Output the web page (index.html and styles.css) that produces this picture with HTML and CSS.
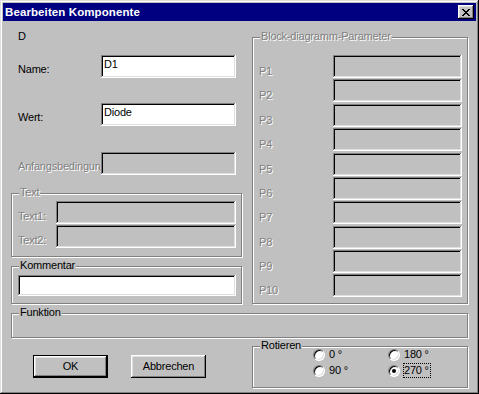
FILE: index.html
```html
<!DOCTYPE html>
<html lang="de">
<head>
<meta charset="utf-8">
<title>Bearbeiten Komponente</title>
<link rel="stylesheet" href="styles.css">
</head>
<body>
<div class="window">
  <div class="titlebar">
    <span class="title">Bearbeiten Komponente</span>
    <button class="close" aria-label="Schließen">
      <svg width="8" height="7" viewBox="0 0 8 7" shape-rendering="crispEdges"><path fill="#000" d="M0 0h2v1H0zM6 0h2v1H6zM1 1h2v1H1zM5 1h2v1H5zM2 2h4v1H2zM3 3h2v1H3zM2 4h4v1H2zM1 5h2v1H1zM5 5h2v1H5zM0 6h2v1H0zM6 6h2v1H6z"/></svg>
    </button>
  </div>
  <div class="body">
    <div class="main">
      <div class="left">
        <div class="static">D</div>
        <div class="row r-name"><span class="lbl">Name:</span><div class="edit">D1</div></div>
        <div class="row r-wert"><span class="lbl">Wert:</span><div class="edit">Diode</div></div>
        <div class="row r-anf"><span class="lbl dis-text">Anfangsbedingung:</span><div class="edit dis"></div></div>
        <div class="group g-text">
          <div class="legend dis-text">Text</div>
          <div class="trow t1"><span class="lbl dis-text">Text1:</span><div class="edit dis"></div></div>
          <div class="trow t2"><span class="lbl dis-text">Text2:</span><div class="edit dis"></div></div>
        </div>
        <div class="group g-komm">
          <div class="legend">Kommentar</div>
          <div class="edit komm"></div>
        </div>
      </div>
      <div class="group g-block">
        <div class="legend dis-text">Block-diagramm-Parameter</div>
        <div class="plist">
          <div class="prow"><span class="lbl dis-text">P1</span><div class="edit dis"></div></div>
          <div class="prow"><span class="lbl dis-text">P2</span><div class="edit dis"></div></div>
          <div class="prow"><span class="lbl dis-text">P3</span><div class="edit dis"></div></div>
          <div class="prow"><span class="lbl dis-text">P4</span><div class="edit dis"></div></div>
          <div class="prow"><span class="lbl dis-text">P5</span><div class="edit dis"></div></div>
          <div class="prow"><span class="lbl dis-text">P6</span><div class="edit dis"></div></div>
          <div class="prow"><span class="lbl dis-text">P7</span><div class="edit dis"></div></div>
          <div class="prow"><span class="lbl dis-text">P8</span><div class="edit dis"></div></div>
          <div class="prow"><span class="lbl dis-text">P9</span><div class="edit dis"></div></div>
          <div class="prow"><span class="lbl dis-text">P10</span><div class="edit dis"></div></div>
        </div>
      </div>
    </div>
    <div class="group g-funk">
      <div class="legend">Funktion</div>
    </div>
    <div class="bottom">
      <div class="buttons">
        <button class="btn default">OK</button>
        <button class="btn">Abbrechen</button>
      </div>
      <div class="group g-rot">
        <div class="legend">Rotieren</div>
        <div class="opt"><span class="radio"></span><span class="otext">0 °</span></div>
        <div class="opt"><span class="radio"></span><span class="otext">180 °</span></div>
        <div class="opt c2"><span class="radio"></span><span class="otext">90 °</span></div>
        <div class="opt"><span class="radio on"></span><span class="otext focus">270 °</span></div>
      </div>
    </div>
  </div>
</div>
</body>
</html>
```

FILE: styles.css
```css
* { box-sizing: border-box; }
html, body { margin: 0; padding: 0; background: #c0c0c0; }
body {
  font-family: "Liberation Sans", Arial, sans-serif;
  font-size: 11px;
  line-height: 13px;
  letter-spacing: -0.2px;
  color: #000;
}
.window {
  width: 479px;
  height: 394px;
  padding: 3px;
  background: #c0c0c0;
  box-shadow: inset -1px -1px #000, inset 1px 1px #dfdfdf, inset -2px -2px #808080, inset 2px 2px #fff;
  display: flex;
  flex-direction: column;
}
.titlebar {
  height: 18px;
  flex: none;
  background: #000080;
  color: #fff;
  display: flex;
  align-items: center;
  padding: 0 2px;
}
.title { flex: 1; font-weight: bold; font-size: 11.5px; letter-spacing: 0.1px; }
.close {
  width: 16px;
  height: 14px;
  padding: 0;
  border: 0;
  background: #c0c0c0;
  box-shadow: inset -1px -1px #000, inset 1px 1px #fff, inset -2px -2px #808080, inset 2px 2px #dfdfdf;
  display: flex;
  align-items: center;
  justify-content: center;
}
.close svg { display: block; }

.body { padding: 0 8px; }
.main { display: flex; justify-content: space-between; align-items: flex-start; }
.left { width: 231px; padding-top: 9px; }
.static { padding-left: 7px; height: 13px; }

.lbl { white-space: nowrap; overflow: hidden; flex: none; }
.dis-text { color: #808080; text-shadow: 1px 1px #fff; }

.edit {
  flex: none;
  height: 23px;
  background: #fff;
  padding: 3px 3px 0;
  white-space: nowrap;
  overflow: hidden;
  box-shadow: inset -1px -1px #fff, inset 1px 1px #808080, inset -2px -2px #dfdfdf, inset 2px 2px #000;
}
.edit.dis { background: #c0c0c0; }

.row { display: flex; align-items: flex-end; }
.row .lbl { width: 89px; margin-right: 1px; padding-left: 7px; padding-bottom: 2px; }
.row .edit { width: 135px; }
.r-name { margin-top: 12px; }
.r-wert { margin-top: 25px; }
.r-anf { margin-top: 26px; }

.group {
  border: 1px solid #808080;
  box-shadow: inset 1px 1px #fff, 1px 1px #fff;
}
.legend {
  display: block;
  width: fit-content;
  height: 13px;
  margin: -8px 0 0 7px;
  padding: 0 1px;
  background: #c0c0c0;
  white-space: nowrap;
}

.g-text { margin-top: 18px; height: 64px; }
.trow { display: flex; align-items: flex-end; padding-left: 6px; }
.trow .lbl { width: 38px; padding-bottom: 1px; }
.trow .edit { width: 180px; }
.t1 { margin-top: 2px; }
.t2 { margin-top: 1px; }

.g-komm { margin-top: 9px; height: 38px; }
.komm { margin: 3px 0 0 6px; width: 218px; height: 21px; }

.g-block { width: 216px; margin-top: 16px; height: 267px; }
.plist { margin-top: 12px; padding-left: 6px; display: grid; grid-auto-rows: 23px; row-gap: 1.375px; }
.prow { display: flex; align-items: flex-end; }
.prow .lbl { width: 74px; }
.prow .edit { width: 129px; }

.g-funk { margin-top: 9px; height: 25px; }

.bottom { display: flex; align-items: flex-start; margin-top: 8px; }
.buttons { display: flex; gap: 23px; margin-top: 9px; padding-left: 22px; }
.btn {
  width: 75px;
  height: 23px;
  padding: 0;
  border: 0;
  background: #c0c0c0;
  font: inherit;
  color: #000;
  letter-spacing: inherit;
  box-shadow: inset -1px -1px #000, inset 1px 1px #fff, inset -2px -2px #808080, inset 2px 2px #dfdfdf;
}
.btn.default {
  box-shadow: inset 0 0 0 1px #000, inset -2px -2px #000, inset 2px 2px #fff, inset -3px -3px #808080, inset 3px 3px #dfdfdf;
}

.g-rot {
  margin-left: auto;
  width: 216px;
  height: 42px;
  display: grid;
  grid-template-columns: 60px 75px 1fr;
  grid-template-rows: 15px 15px;
  row-gap: 1px;
  align-content: start;
}
.g-rot .legend { justify-self: start; align-self: start; }
.opt { display: flex; align-items: center; gap: 3px; }
.opt.c2 { grid-column: 2; }
.radio {
  flex: none;
  position: relative;
  width: 12px;
  height: 12px;
  border-radius: 50%;
  background: #fff;
  border: 1px solid;
  border-color: #808080 #fff #fff #808080;
  box-shadow: inset 1px 1px #000, inset -1px -1px #dfdfdf;
}
.radio.on::after {
  content: "";
  position: absolute;
  left: 3px;
  top: 3px;
  width: 4px;
  height: 4px;
  border-radius: 50%;
  background: #000;
}
.otext { border: 1px solid transparent; line-height: 13px; padding-right: 1px; }
.otext.focus { border: 1px dotted #000; }
```
